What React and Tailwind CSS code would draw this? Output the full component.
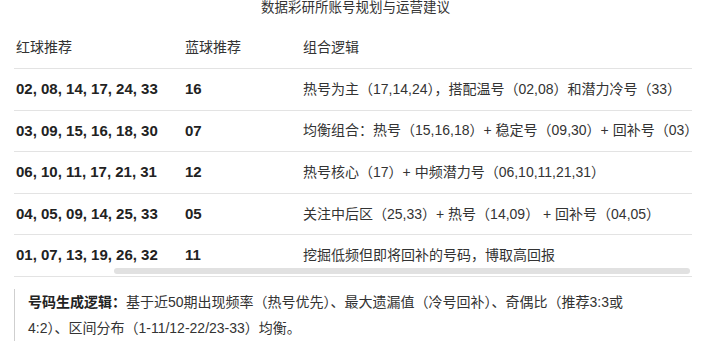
import React from 'react';

const rows = [
  { red: '02, 08, 14, 17, 24, 33', blue: '16', logic: '热号为主（17,14,24），搭配温号（02,08）和潜力冷号（33）' },
  { red: '03, 09, 15, 16, 18, 30', blue: '07', logic: '均衡组合：热号（15,16,18）+ 稳定号（09,30）+ 回补号（03）' },
  { red: '06, 10, 11, 17, 21, 31', blue: '12', logic: '热号核心（17）+ 中频潜力号（06,10,11,21,31）' },
  { red: '04, 05, 09, 14, 25, 33', blue: '05', logic: '关注中后区（25,33）+ 热号（14,09） + 回补号（04,05）' },
  { red: '01, 07, 13, 19, 26, 32', blue: '11', logic: '挖掘低频但即将回补的号码，博取高回报' },
];

export default function App() {
  return (
    <div
      className="w-[711px] h-[347px] overflow-hidden bg-white text-[#333]"
      style={{ fontFamily: '"Liberation Sans", "Noto Sans CJK SC", sans-serif' }}
    >
      <div className="text-center text-[13.5px] leading-[15px] h-[15px] text-[#333]">
        数据彩研所账号规划与运营建议
      </div>

      <div className="relative ml-[14px] w-[678px] mt-[12px]">
        <div className="grid grid-cols-[169px_118px_1fr] pl-[2px] h-[42px] items-center border-b border-[#e3e3e3] text-[14px]">
          <div>红球推荐</div>
          <div>蓝球推荐</div>
          <div>组合逻辑</div>
        </div>
        {rows.map(r => (
          <div
            key={r.red}
            className="grid grid-cols-[169px_118px_1fr] pl-[2px] h-[41.6px] items-center border-b border-[#e3e3e3]"
          >
            <div className="font-bold text-[15px] text-[#222]">{r.red}</div>
            <div className="font-bold text-[15px] text-[#222]">{r.blue}</div>
            <div className="text-[14px] whitespace-nowrap">{r.logic}</div>
          </div>
        ))}
        {/* horizontal scrollbar thumb */}
        <div className="absolute left-[100px] bottom-[3px] w-[576px] h-[6px] rounded-full bg-[#e1e1e1]" />
      </div>

      <div className="ml-[14px] mt-[12px] border-l border-[#cfcfcf] pl-[13px] w-[630px] text-[14px] leading-[26px]">
        <p>
          <span className="font-bold text-[#222]">号码生成逻辑：</span>
          基于近50期出现频率（热号优先）、最大遗漏值（冷号回补）、奇偶比（推荐3:3或4:2）、区间分布（1-11/12-22/23-33）均衡。
        </p>
      </div>
    </div>
  );
}
